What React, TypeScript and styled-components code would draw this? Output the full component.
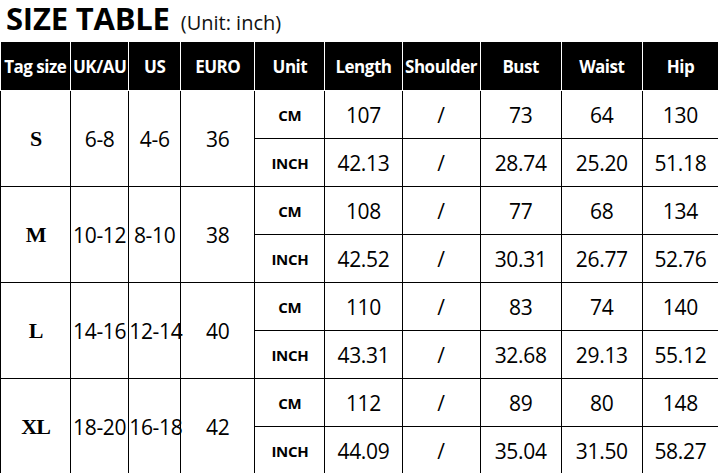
import { FC } from "react";
import styled, { createGlobalStyle } from "styled-components";

type SizeRow = {
  tag: string;
  uk: string;
  us: string;
  euro: string;
  cm: string[];
  inch: string[];
};

const SIZES: SizeRow[] = [
  { tag: "S", uk: "6-8", us: "4-6", euro: "36", cm: ["107", "/", "73", "64", "130"], inch: ["42.13", "/", "28.74", "25.20", "51.18"] },
  { tag: "M", uk: "10-12", us: "8-10", euro: "38", cm: ["108", "/", "77", "68", "134"], inch: ["42.52", "/", "30.31", "26.77", "52.76"] },
  { tag: "L", uk: "14-16", us: "12-14", euro: "40", cm: ["110", "/", "83", "74", "140"], inch: ["43.31", "/", "32.68", "29.13", "55.12"] },
  { tag: "XL", uk: "18-20", us: "16-18", euro: "42", cm: ["112", "/", "89", "80", "148"], inch: ["44.09", "/", "35.04", "31.50", "58.27"] },
];

const HEADERS = ["Tag size", "UK/AU", "US", "EURO", "Unit", "Length", "Shoulder", "Bust", "Waist", "Hip"];
const WIDTHS = [70, 58, 52, 74, 70, 77, 78, 81, 81, 76];

const App: FC = () => {
  return (
    <Page>
      <GlobalStyle />
      <TitleBar>
        <Title>SIZE TABLE</Title>
        <Unit>(Unit: inch)</Unit>
      </TitleBar>
      <Table>
        <colgroup>
          {WIDTHS.map((w, i) => (
            <col key={i} style={{ width: w }} />
          ))}
        </colgroup>
        <thead>
          <tr>
            {HEADERS.map((h) => (
              <HeadCell key={h}>{h}</HeadCell>
            ))}
          </tr>
        </thead>
        <tbody>
          {SIZES.map((s) => [
            <tr key={s.tag + "cm"}>
              <TagCell rowSpan={2}>{s.tag}</TagCell>
              <Cell rowSpan={2}>{s.uk}</Cell>
              <Cell rowSpan={2}>{s.us}</Cell>
              <Cell rowSpan={2}>{s.euro}</Cell>
              <UnitCell>CM</UnitCell>
              {s.cm.map((v, i) => (
                <Cell key={i}>{v}</Cell>
              ))}
            </tr>,
            <tr key={s.tag + "inch"}>
              <UnitCell>INCH</UnitCell>
              {s.inch.map((v, i) => (
                <Cell key={i}>{v}</Cell>
              ))}
            </tr>,
          ])}
        </tbody>
      </Table>
    </Page>
  );
};

export default App;

const GlobalStyle = createGlobalStyle`
  body {
    margin: 0;
    background: #ffffff;
    font-family: "Open Sans", "Noto Sans", sans-serif;
    overflow: hidden;
  }
`;

const Page = styled.div`
  width: 718px;
  height: 473px;
  overflow: hidden;
  background: #ffffff;
`;

const TitleBar = styled.div`
  display: flex;
  align-items: baseline;
  height: 42px;
  padding-left: 6px;
  gap: 11px;
  white-space: nowrap;
`;

const Title = styled.span`
  font-size: 31px;
  font-weight: 700;
  color: #000;
  line-height: 37px;
  letter-spacing: -0.2px;
`;

const Unit = styled.span`
  font-size: 20px;
  line-height: 24px;
  color: #111;
`;

const Table = styled.table`
  border-collapse: collapse;
  table-layout: fixed;
  width: 719px;
  color: #000;
`;

const HeadCell = styled.th`
  background: #000;
  color: #fff;
  height: 48px;
  padding: 0;
  font-size: 17px;
  font-weight: 700;
  letter-spacing: -0.5px;
  white-space: nowrap;
  border: 1px solid #fff;
  border-top: none;
  text-align: center;
  &:first-child {
    border-left: none;
  }
`;

const Cell = styled.td`
  height: 47px;
  padding: 0;
  border: 1px solid #000;
  text-align: center;
  font-size: 21px;
  white-space: nowrap;
  letter-spacing: -0.3px;
`;

const TagCell = styled(Cell)`
  font-family: "Liberation Serif", "DejaVu Serif", serif;
  font-size: 22px;
  font-weight: 700;
  letter-spacing: -1px;
`;

const UnitCell = styled(Cell)`
  font-size: 15px;
  font-weight: 700;
`;
